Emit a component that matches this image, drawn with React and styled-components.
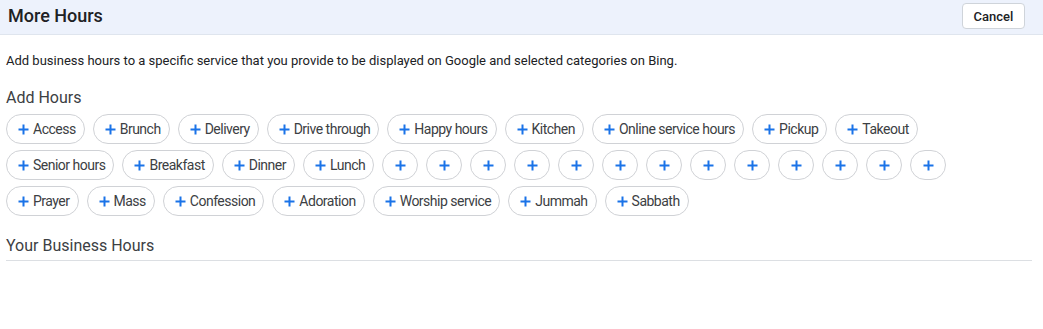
import React from "react";
import styled, { createGlobalStyle } from "styled-components";

const GlobalStyle = createGlobalStyle`
  body {
    margin: 0;
    background: #ffffff;
    font-family: Roboto, "Liberation Sans", Arial, sans-serif;
    color: #202124;
  }
`;

const rows = [
  ["Access", "Brunch", "Delivery", "Drive through", "Happy hours", "Kitchen", "Online service hours", "Pickup", "Takeout"],
  ["Senior hours", "Breakfast", "Dinner", "Lunch", ...Array(13).fill("")],
  ["Prayer", "Mass", "Confession", "Adoration", "Worship service", "Jummah", "Sabbath"],
];

const Page = () => {
  return (
    <>
      <GlobalStyle />
      <Header>
        <Title>More Hours</Title>
        <CancelButton type="button">Cancel</CancelButton>
      </Header>
      <Body>
        <Description>
          Add business hours to a specific service that you provide to be displayed on Google and selected categories on Bing.
        </Description>
        <SectionTitle>Add Hours</SectionTitle>
        <ChipList>
          {rows.map((row, i) => (
            <ChipRow key={i}>
              {row.map((label, j) => (
                <Chip key={j} type="button" $empty={!label}>
                  <PlusIcon />
                  {label && <span>{label}</span>}
                </Chip>
              ))}
            </ChipRow>
          ))}
        </ChipList>
        <YourHours>Your Business Hours</YourHours>
      </Body>
    </>
  );
};

const PlusIcon = () => (
  <svg width="11" height="11" viewBox="0 0 11 11">
    <path d="M5.5 0.5v10M0.5 5.5h10" stroke="#1a73e8" strokeWidth="2" fill="none" />
  </svg>
);

export default Page;

const Header = styled.div`
  height: 35px;
  box-sizing: border-box;
  display: flex;
  align-items: center;
  justify-content: space-between;
  padding: 0 18px 0 8px;
  background-color: #edf2fc;
  border-bottom: 1px solid #dfe5ee;
`;

const Title = styled.h1`
  margin: -3px 0 0;
  font-size: 18px;
  font-weight: 500;
  color: #202124;
`;

const CancelButton = styled.button`
  height: 26px;
  width: 63px;
  margin-top: -2px;
  border: 1px solid #cfd4da;
  border-radius: 4px;
  background-color: #ffffff;
  font-family: Roboto, "Liberation Sans", Arial, sans-serif;
  font-size: 13px;
  font-weight: 500;
  color: #202124;
  padding: 0;
`;

const Body = styled.div`
  padding: 0 11px 0 6px;
`;

const Description = styled.p`
  margin: 18px 0 0;
  font-size: 13px;
  line-height: 16px;
  color: #202124;
`;

const SectionTitle = styled.h2`
  margin: 20px 0 0;
  font-size: 16px;
  font-weight: 400;
  line-height: 18px;
  color: #3c4043;
`;

const ChipList = styled.div`
  display: flex;
  flex-direction: column;
  gap: 6px;
  margin-top: 7px;
`;

const ChipRow = styled.div`
  display: flex;
  gap: 8px;
`;

const Chip = styled.button`
  height: 30px;
  box-sizing: border-box;
  display: inline-flex;
  align-items: center;
  justify-content: center;
  gap: 4px;
  padding: ${(p) => (p.$empty ? "0" : "0 8px 0 11px")};
  width: ${(p) => (p.$empty ? "36px" : "auto")};
  border: 1px solid #d0d2d6;
  border-radius: 15px;
  background-color: #ffffff;
  font-family: Roboto, "Liberation Sans", Arial, sans-serif;
  font-size: 14px;
  letter-spacing: -0.5px;
  color: #3c4043;
  cursor: pointer;

  svg {
    flex-shrink: 0;
    margin-top: 1px;
  }
`;

const YourHours = styled.h2`
  margin: 21px 0 0;
  padding-bottom: 5px;
  font-size: 16px;
  font-weight: 400;
  line-height: 18px;
  color: #3c4043;
  border-bottom: 1px solid #dcdfe3;
`;
